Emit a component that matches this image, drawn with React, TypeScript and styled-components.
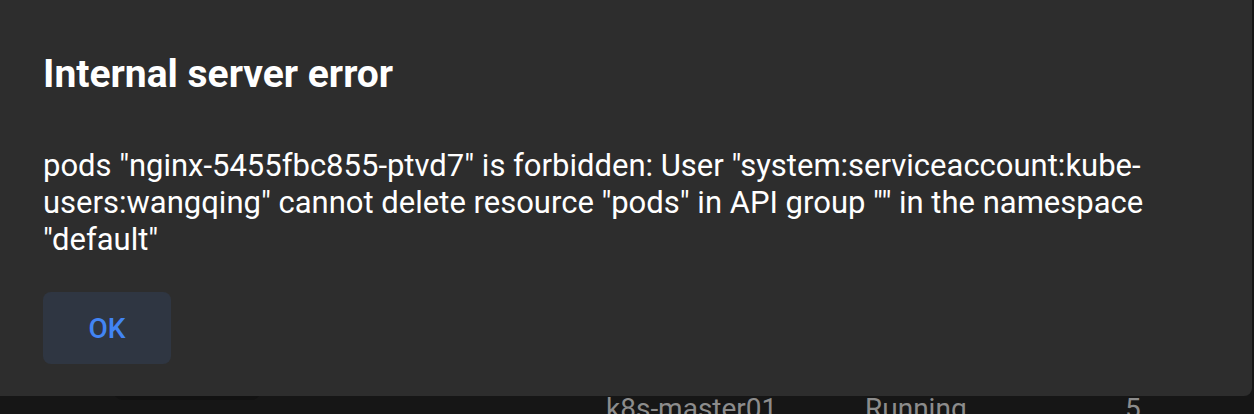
import React from "react";
import styled, { createGlobalStyle } from "styled-components";

const GlobalStyle = createGlobalStyle`
  html, body {
    margin: 0;
    padding: 0;
    background: #161616;
    font-family: Roboto, "Liberation Sans", sans-serif;
    overflow: hidden;
  }
`;

const Page = styled.div`
  position: relative;
  width: 1254px;
  height: 414px;
  background: #161616;
`;

const BackRow = styled.div`
  display: grid;
  grid-template-columns: 606px 259px 260px auto;
  padding-top: 395px;
  color: #8c8c8c;
  font-size: 28px;
  line-height: 28px;
`;

const Cell = styled.div<{ $col: number }>`
  grid-column: ${(p) => p.$col};
`;

const Pill = styled.div`
  position: absolute;
  left: 113px;
  top: 380px;
  width: 148px;
  height: 20px;
  border-radius: 10px;
  background: #121212;
`;

const Dialog = styled.div`
  position: absolute;
  left: 0;
  top: 0;
  width: 1252px;
  height: 396px;
  box-sizing: border-box;
  padding: 51px 43px 0 43px;
  background: #2d2d2d;
  border-bottom-right-radius: 8px;
  display: flex;
  flex-direction: column;
  align-items: flex-start;
`;

const Title = styled.h2`
  margin: 0;
  color: #ffffff;
  font-size: 39px;
  font-weight: 700;
  line-height: 46px;
`;

const Message = styled.p`
  margin: 50px 0 0 0;
  color: #ffffff;
  font-size: 31px;
  line-height: 37px;
  width: 1166px;
`;

const OkButton = styled.button`
  margin-top: 34px;
  width: 128px;
  height: 72px;
  border: none;
  border-radius: 8px;
  background: #2f3642;
  color: #4285f4;
  font-family: Roboto, "Liberation Sans", sans-serif;
  font-size: 28px;
  font-weight: 500;
  cursor: pointer;
`;

export default function App() {
  return (
    <Page>
      <GlobalStyle />
      <BackRow>
        <Cell $col={2}>k8s-master01</Cell>
        <Cell $col={3}>Running</Cell>
        <Cell $col={4}>5</Cell>
      </BackRow>
      <Pill />
      <Dialog>
        <Title>Internal server error</Title>
        <Message>
          pods "nginx-5455fbc855-ptvd7" is forbidden: User
          "system:serviceaccount:kube-users:wangqing" cannot delete resource
          "pods" in API group "" in the namespace "default"
        </Message>
        <OkButton>OK</OkButton>
      </Dialog>
    </Page>
  );
}
